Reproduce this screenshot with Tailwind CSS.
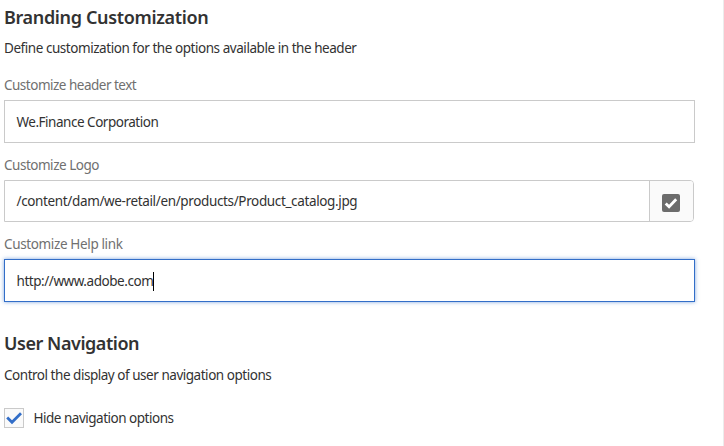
<!DOCTYPE html>
<html lang="en">
<head>
<meta charset="utf-8">
<title>Branding Customization</title>
<script src="https://cdn.jsdelivr.net/npm/@tailwindcss/browser@4"></script>
</head>
<body class="bg-white">
<main class="flex h-[446px] w-[724px] flex-col overflow-hidden border-r border-[#ececec] pl-1 font-['Noto_Sans','Open_Sans',sans-serif] text-[13.5px] text-[#323232]">
  <h1 class="h-9 text-[18px] leading-[35px] font-semibold whitespace-nowrap"><span class="tracking-[-0.35px]">Branding Customization</span></h1>
  <p class="h-[37px] leading-6 whitespace-nowrap"><span class="tracking-[-0.45px]">Define customization for the options available in the header</span></p>
  <label class="h-[27px] leading-6 text-[#707070]"><span class="tracking-[-0.5px]">Customize header text</span></label>
  <div class="flex h-[43px] w-[691px] items-center border border-[#cacaca] pt-[2px] pl-[11.5px]"><span class="tracking-[-0.48px]">We.Finance Corporation</span></div>
  <label class="mt-[10px] h-[27px] leading-6 text-[#707070]"><span class="tracking-[-0.48px]">Customize Logo</span></label>
  <div class="flex h-[42px] w-[690px] rounded-r-[4px] border border-[#cacaca]">
    <div class="flex flex-1 items-center pl-[11.5px]"><span class="tracking-[-0.36px]">/content/dam/we-retail/en/products/Product_catalog.jpg</span></div>
    <button class="flex w-[44px] items-center justify-center rounded-r-[3px] border-l border-[#cacaca] bg-[#fafafa] pt-[4px] pr-px">
      <svg class="h-[18px] w-[18px]" viewBox="0 0 18 18"><rect width="18" height="18" rx="2" fill="#6c6c6c"/><path d="M3.7 9.4 7.1 12.8 14.2 5.3" fill="none" stroke="#fff" stroke-width="2.8"/></svg>
    </button>
  </div>
  <label class="mt-[10px] h-[27px] leading-6 text-[#707070]"><span class="tracking-[-0.36px]">Customize Help link</span></label>
  <div class="flex h-[43px] w-[691px] items-center border border-[#326ec8] pt-[2px] pl-[11.5px] shadow-[0_0_4px_#326ec8a0]"><span class="tracking-[-0.45px]">http://www.adobe.com</span><span class="h-[19px] w-px bg-black"></span></div>
  <h2 class="mt-[24px] h-[37px] text-[18px] leading-[35px] font-semibold whitespace-nowrap"><span class="tracking-[-0.45px]">User Navigation</span></h2>
  <p class="h-[45px] leading-6"><span class="tracking-[-0.47px]">Control the display of user navigation options</span></p>
  <div class="flex h-5 items-center gap-[9.5px]">
    <span class="flex h-5 w-5 items-center justify-center border border-[#cacaca] bg-[#fafafa]"><svg class="h-[18px] w-[18px]" viewBox="0 0 18 18"><path d="M2.2 8.5 7 13.2 16 4.2" fill="none" stroke="#326ec8" stroke-width="2.8"/></svg></span>
    <span class="tracking-[-0.49px]">Hide navigation options</span>
  </div>
</main>
</body>
</html>
